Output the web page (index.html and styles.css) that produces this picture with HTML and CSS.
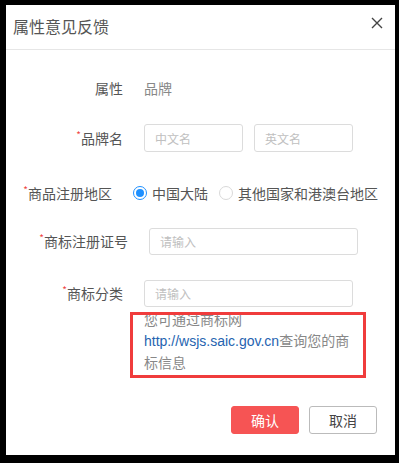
FILE: index.html
```html
<!DOCTYPE html>
<html lang="zh">
<head>
<meta charset="utf-8">
<link rel="stylesheet" href="styles.css">
</head>
<body>
<div class="dialog">
  <div class="header">
    <span class="title">属性意见反馈</span>
    <svg class="close" width="12" height="12" viewBox="0 0 12 12"><path d="M1 1L11 11M11 1L1 11" stroke="#444" stroke-width="1.4" fill="none"/></svg>
  </div>
  <div class="body">
    <div class="row r1">
      <div class="label">属性</div>
      <div class="control value">品牌</div>
    </div>
    <div class="row r2">
      <div class="label"><span class="req">*</span>品牌名</div>
      <div class="control pair">
        <div class="input small">中文名</div>
        <div class="input small">英文名</div>
      </div>
    </div>
    <div class="row r3">
      <div class="label"><span class="req">*</span>商品注册地区</div>
      <div class="control radios">
        <span class="radio on"></span><span class="rtext">中国大陆</span>
        <span class="radio"></span><span class="rtext">其他国家和港澳台地区</span>
      </div>
    </div>
    <div class="row r4">
      <div class="label"><span class="req">*</span>商标注册证号</div>
      <div class="control"><div class="input wide">请输入</div></div>
    </div>
    <div class="row r5">
      <div class="label"><span class="req">*</span>商标分类</div>
      <div class="control"><div class="input wide">请输入</div></div>
    </div>
    <div class="hint">您可通过商标网<br><span class="link">http://wsjs.saic.gov.cn</span>查询您的商标信息</div>
    <div class="footer">
      <button class="btn primary">确认</button>
      <button class="btn">取消</button>
    </div>
  </div>
  <div class="mark"></div>
</div>
</body>
</html>
```
FILE: styles.css
```css
html, body {
  margin: 0;
  padding: 0;
  background: #000;
}
body {
  font-family: "Noto Sans CJK SC", "Noto Sans", sans-serif;
  color: #555;
}
.dialog {
  position: relative;
  margin: 5px 0 0 6px;
  width: 389px;
  height: 450px;
  background: #fff;
}
.header {
  height: 44px;
  border-bottom: 1px solid #e6e6e6;
  display: flex;
  align-items: center;
  justify-content: space-between;
  padding: 0 12px 0 7px;
}
.title {
  font-size: 16px;
  color: #555;
  margin-top: -2px;
}
.close {
  margin-top: -8px;
}
.body {
  padding-top: 24px;
}
.row {
  display: flex;
  align-items: center;
  height: 28px;
}
.label {
  width: 117px;
  flex: none;
  text-align: right;
  font-size: 14px;
  color: #555;
  white-space: nowrap;
}
.req {
  color: #f04545;
  font-size: 10px;
  vertical-align: top;
  line-height: 14px;
}
.control {
  margin-left: 21px;
  display: flex;
  align-items: center;
}
.value {
  font-size: 14px;
  color: #888;
}
.r2 { margin-top: 22px; }
.r3 { margin-top: 27px; margin-left: -11px; }
.r4 { margin-top: 20px; margin-left: 5px; }
.r5 { margin-top: 24px; }
.pair {
  gap: 11px;
}
.input {
  box-sizing: border-box;
  height: 28px;
  border: 1px solid #dcdcdc;
  border-radius: 3px;
  padding-left: 10px;
  font-size: 12px;
  color: #c0c0c0;
  display: flex;
  align-items: center;
}
.input.small { width: 99px; }
.input.wide { width: 209px; height: 27px; }
.radios {
  font-size: 14px;
  color: #555;
}
.radio {
  box-sizing: border-box;
  width: 14px;
  height: 14px;
  border-radius: 50%;
  border: 1px solid #d9d9d9;
  display: inline-block;
  flex: none;
  position: relative;
}
.radio.on {
  border-color: #1e90ff;
}
.radio.on::after {
  content: "";
  position: absolute;
  left: 2px;
  top: 2px;
  width: 8px;
  height: 8px;
  border-radius: 50%;
  background: #1e90ff;
}
.rtext {
  margin-left: 5px;
  margin-right: 11px;
}
.hint {
  margin: 2px 0 0 138px;
  width: 209px;
  font-size: 14px;
  line-height: 21px;
  color: #888;
}
.link {
  font-family: "Liberation Sans", Arial, sans-serif;
  color: #2563b0;
}
.footer {
  display: flex;
  justify-content: flex-end;
  gap: 10px;
  padding-right: 18px;
  margin-top: 33px;
}
.btn {
  box-sizing: border-box;
  width: 68px;
  height: 28px;
  border-radius: 3px;
  border: 1px solid #bbb;
  background: #fff;
  font-family: inherit;
  font-size: 14px;
  color: #444;
  padding: 0;
}
.btn.primary {
  background: #f65454;
  border-color: #f65454;
  color: #fff;
}
.mark {
  position: absolute;
  left: 124px;
  top: 307px;
  width: 236px;
  height: 66px;
  box-sizing: border-box;
  border: 3px solid #f03c3c;
}
```
